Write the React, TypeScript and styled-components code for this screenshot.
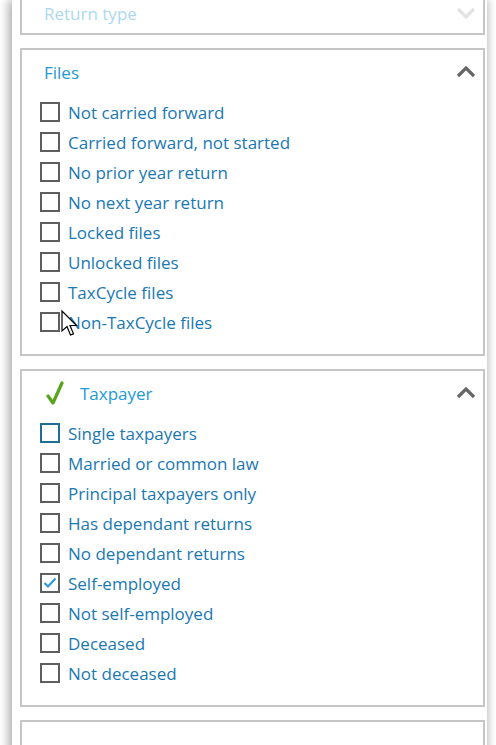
import React from 'react';
import styled, { createGlobalStyle } from 'styled-components';

const GlobalStyle = createGlobalStyle`
  html, body {
    margin: 0;
    padding: 0;
    background: #ffffff;
    overflow: hidden;
  }
  body {
    font-family: 'Open Sans', 'Noto Sans', sans-serif;
  }
`;

const Card = styled.div`
  margin-left: 12px;
  width: 475px;
  height: 760px;
  box-sizing: border-box;
  padding: 0 2px 0 8px;
  background: #ffffff;
  box-shadow: -4px 0 9px rgba(0, 0, 0, 0.3), 4px 0 6px rgba(0, 0, 0, 0.12);
  display: flex;
  flex-direction: column;
  gap: 13px;
`;

const Panel = styled.section<{ $first?: boolean }>`
  border: 2px solid #c6c6c6;
  background: #ffffff;
  margin-top: ${(p) => (p.$first ? '-9px' : '0')};
`;

const Header = styled.div<{ $collapsed?: boolean }>`
  height: ${(p) => (p.$collapsed ? '40px' : '44px')};
  display: flex;
  align-items: center;
  padding: 0 7px 0 22px;
  gap: 14px;
`;

const Title = styled.span<{ $faded?: boolean }>`
  flex: 1;
  font-size: 17px;
  color: ${(p) => (p.$faded ? '#acd8ef' : '#229ad6')};
`;

const Items = styled.ul`
  list-style: none;
  margin: 0;
  padding: 3px 0 17px 18px;
`;

const Row = styled.li`
  position: relative;
  height: 30px;
  display: flex;
  align-items: center;
  gap: 8px;
`;

const Box = styled.span<{ $focus?: boolean }>`
  width: 20px;
  height: 20px;
  box-sizing: border-box;
  border: 2px solid ${(p) => (p.$focus ? '#1d6f9a' : '#5e5e5e')};
  display: flex;
  align-items: center;
  justify-content: center;
`;

const Label = styled.span`
  font-size: 17px;
  color: #1a78b2;
  white-space: nowrap;
`;

const Cursor = styled.svg`
  position: absolute;
  left: 21px;
  top: 3px;
`;

const Chevron = ({ down, faded }: { down?: boolean; faded?: boolean }) => (
  <svg width="20" height="12" viewBox="0 0 20 12">
    <path
      d={down ? 'M2 2 L10 10 L18 2' : 'M2 10 L10 2 L18 10'}
      fill="none"
      stroke={faded ? '#e2e2e2' : '#666666'}
      strokeWidth="3.2"
    />
  </svg>
);

const GreenCheck = () => (
  <svg width="22" height="24" viewBox="0 0 22 24">
    <path d="M4 15 L9 22 L18 2" fill="none" stroke="#58a51c" strokeWidth="3.2" strokeLinejoin="round" strokeLinecap="round" />
  </svg>
);

const BlueCheck = () => (
  <svg width="14" height="12" viewBox="0 0 14 12">
    <path d="M1.5 6 L5 9.5 L12.5 1.5" fill="none" stroke="#2a9ad8" strokeWidth="2.2" />
  </svg>
);

type Item = { label: string; checked?: boolean; focus?: boolean; cursor?: boolean };

const files: Item[] = [
  { label: 'Not carried forward' },
  { label: 'Carried forward, not started' },
  { label: 'No prior year return' },
  { label: 'No next year return' },
  { label: 'Locked files' },
  { label: 'Unlocked files' },
  { label: 'TaxCycle files' },
  { label: 'Non-TaxCycle files', cursor: true },
];

const taxpayer: Item[] = [
  { label: 'Single taxpayers', focus: true },
  { label: 'Married or common law' },
  { label: 'Principal taxpayers only' },
  { label: 'Has dependant returns' },
  { label: 'No dependant returns' },
  { label: 'Self-employed', checked: true },
  { label: 'Not self-employed' },
  { label: 'Deceased' },
  { label: 'Not deceased' },
];

const CheckList = ({ items }: { items: Item[] }) => (
  <Items>
    {items.map((it) => (
      <Row key={it.label}>
        <Box $focus={it.focus}>{it.checked && <BlueCheck />}</Box>
        <Label>{it.label}</Label>
        {it.cursor && (
          <Cursor width="19" height="28" viewBox="0 0 19 28">
            <path
              d="M1 1 L1 21 L6 16.5 L9.5 25 L12.5 23.8 L9 15.5 L15.5 15.5 Z"
              fill="#ffffff"
              stroke="#000000"
              strokeWidth="1.2"
              strokeLinejoin="miter"
            />
          </Cursor>
        )}
      </Row>
    ))}
  </Items>
);

export default function App() {
  return (
    <>
      <GlobalStyle />
      <Card>
        <Panel $first>
          <Header $collapsed>
            <Title $faded>Return type</Title>
            <Chevron down faded />
          </Header>
        </Panel>
        <Panel>
          <Header>
            <Title>Files</Title>
            <Chevron />
          </Header>
          <CheckList items={files} />
        </Panel>
        <Panel>
          <Header>
            <GreenCheck />
            <Title>Taxpayer</Title>
            <Chevron />
          </Header>
          <CheckList items={taxpayer} />
        </Panel>
        <Panel>
          <Header />
        </Panel>
      </Card>
    </>
  );
}
